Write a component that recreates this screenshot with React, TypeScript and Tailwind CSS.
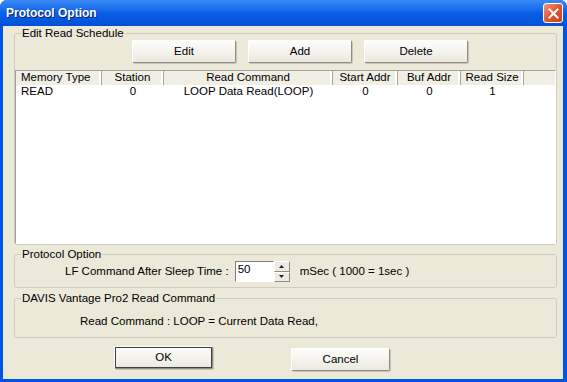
import type { ReactNode } from "react";

const font = { fontFamily: '"Liberation Sans", Arial, sans-serif' };

const columns = [
  { title: "Memory Type", width: "w-[86px]", align: "text-left pl-[5px]" },
  { title: "Station", width: "w-[62px]", align: "text-center" },
  { title: "Read Command", width: "w-[169px]", align: "text-center" },
  { title: "Start Addr", width: "w-[65px]", align: "text-center" },
  { title: "Buf Addr", width: "w-[63px]", align: "text-center" },
  { title: "Read Size", width: "w-[63px]", align: "text-center" },
];

const rows = [["READ", "0", "LOOP Data Read(LOOP)", "0", "0", "1"]];

function XpButton({ children, width, focused }: { children: ReactNode; width: string; focused?: boolean }) {
  return (
    <button
      className={`${width} h-[23px] rounded-[2px] border border-t-white border-l-white border-r-[#8f8d82] border-b-[#8f8d82] bg-gradient-to-b from-[#fdfdfb] to-[#ebe9df] text-[11.5px] text-black shadow-[1px_1px_0_#c9c6b8] ${focused ? "outline outline-1 outline-[#404040] -outline-offset-[2px]" : ""}`}
    >
      {focused ? (
        <span className="flex h-full w-full items-center justify-center border border-dotted border-[#555]">{children}</span>
      ) : (
        children
      )}
    </button>
  );
}

function Group({ label, children, className }: { label: string; children: ReactNode; className?: string }) {
  return (
    <fieldset className={`rounded-[3px] border border-[#cfcdbf] ${className ?? ""}`}>
      <legend className="ml-[6px] px-[1px] text-[11.5px] leading-[14px] text-black">{label}</legend>
      {children}
    </fieldset>
  );
}

export default function App() {
  return (
    <div style={font} className="flex h-[382px] w-[567px] flex-col rounded-t-[7px] bg-[#0055e5] text-black">
      {/* title bar */}
      <div className="flex h-[26px] items-center justify-between rounded-t-[7px] bg-gradient-to-b from-[#3a8af5] via-[#0860e8] to-[#0150d6] pl-[6px] pr-[4px]">
        <span className="text-[12px] font-bold text-white [text-shadow:1px_1px_0_#0a1f6c]">Protocol Option</span>
        <div className="flex h-[20px] w-[20px] items-center justify-center rounded-[3px] border border-white bg-gradient-to-br from-[#f09a7a] via-[#e0562f] to-[#c9401d]">
          <svg width="11" height="11" viewBox="0 0 11 11">
            <path d="M1.5 1.5 L9.5 9.5 M9.5 1.5 L1.5 9.5" stroke="white" strokeWidth="2" strokeLinecap="square" />
          </svg>
        </div>
      </div>

      {/* client area */}
      <div className="mb-[3px] ml-[3px] mr-[4px] flex flex-1 flex-col bg-[#ece9d8] pl-[11px] pr-[6px]">
        <Group label="Edit Read Schedule" className="h-[219px]">
          <div className="flex gap-[12px] pl-[117px]">
            <XpButton width="w-[104px]">Edit</XpButton>
            <XpButton width="w-[104px]">Add</XpButton>
            <XpButton width="w-[104px]">Delete</XpButton>
          </div>
          <div className="mt-[7px] h-[174px] border border-t-[#a0a0a0] border-l-[#a0a0a0] border-r-white border-b-white bg-white">
            <div className="flex h-[14px] bg-[#f1efe4]">
              {columns.map((c) => (
                <div
                  key={c.title}
                  className={`${c.width} ${c.align} border-r border-r-[#a8a699] text-[11.5px] leading-[13px] shadow-[inset_-2px_0_0_#fff]`}
                >
                  {c.title}
                </div>
              ))}
              <div className="flex-1" />
            </div>
            {rows.map((r, i) => (
              <div key={i} className="flex h-[13px] text-[11.5px] leading-[13px]">
                {r.map((cell, j) => (
                  <div key={j} className={`${columns[j].width} ${columns[j].align}`}>
                    {cell}
                  </div>
                ))}
              </div>
            ))}
          </div>
        </Group>

        <Group label="Protocol Option" className="mt-[2px] h-[41px]">
          <div className="flex h-[21px] items-center pl-[50px] text-[11.5px]">
            <span>LF Command After Sleep Time :</span>
            <div className="ml-[6px] flex h-[21px] w-[55px]">
              <div className="flex-1 border border-t-[#808080] border-l-[#808080] border-r-white border-b-white bg-white pl-[2px] leading-[14px]">50</div>
              <div className="flex w-[16px] flex-col">
                <div className="flex flex-1 items-center justify-center border border-t-white border-l-white border-r-[#8f8d82] border-b-[#8f8d82] bg-[#eeece2]">
                  <svg width="5" height="3" viewBox="0 0 5 3"><path d="M2.5 0 L5 3 L0 3 Z" fill="#222" /></svg>
                </div>
                <div className="flex flex-1 items-center justify-center border border-t-white border-l-white border-r-[#8f8d82] border-b-[#8f8d82] bg-[#eeece2]">
                  <svg width="5" height="3" viewBox="0 0 5 3"><path d="M0 0 L5 0 L2.5 3 Z" fill="#222" /></svg>
                </div>
              </div>
            </div>
            <span className="ml-[10px]">mSec ( 1000 = 1sec )</span>
          </div>
        </Group>

        <Group label="DAVIS Vantage Pro2 Read Command" className="mt-[3px] h-[47px]">
          <div className="mt-[9px] pl-[65px] text-[11.5px] leading-[14px]">Read Command : LOOP = Current Data Read,</div>
        </Group>

        <div className="mt-[8px] flex pl-[100px]">
          <XpButton width="w-[99px]" focused>OK</XpButton>
          <div className="ml-[78px]">
            <XpButton width="w-[99px]">Cancel</XpButton>
          </div>
        </div>
      </div>
    </div>
  );
}
